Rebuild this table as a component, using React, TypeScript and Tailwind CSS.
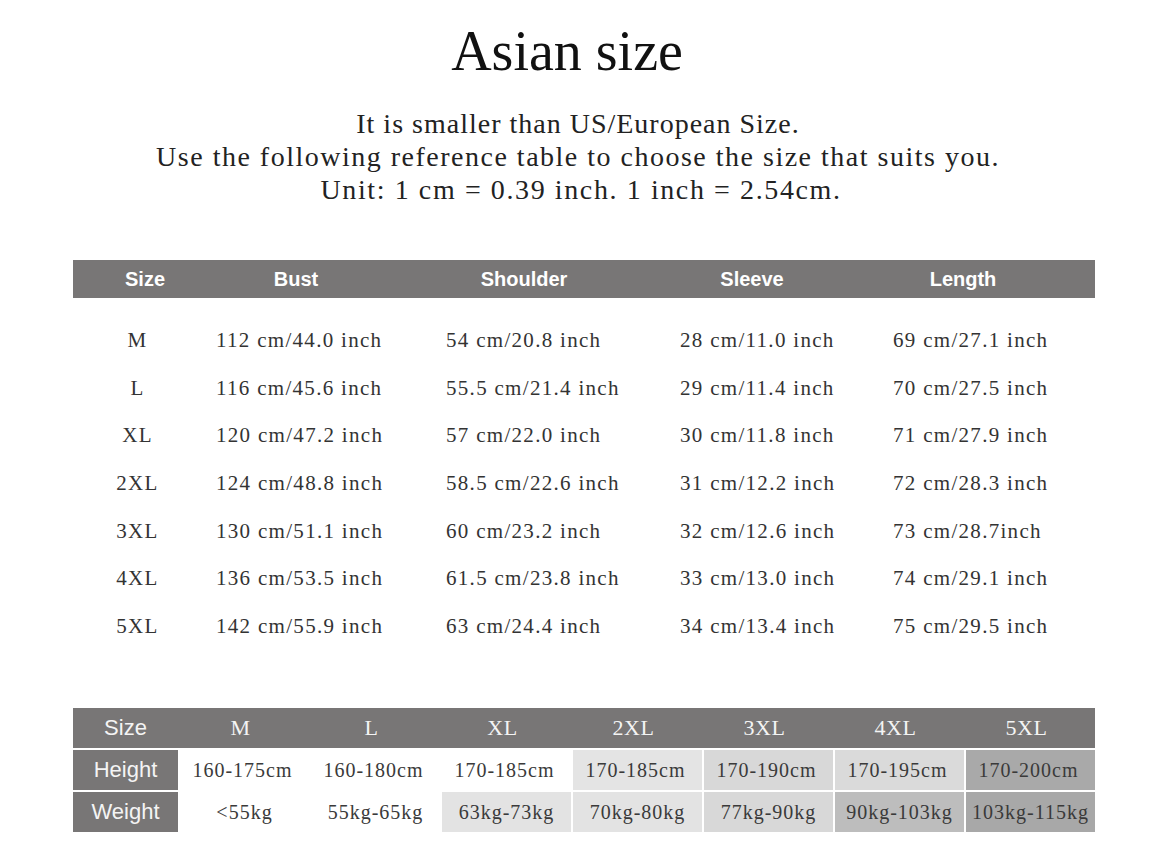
import React from "react";

const rows = [
  ["M", "112 cm/44.0 inch", "54 cm/20.8 inch", "28 cm/11.0 inch", "69 cm/27.1 inch"],
  ["L", "116 cm/45.6 inch", "55.5 cm/21.4 inch", "29 cm/11.4 inch", "70 cm/27.5 inch"],
  ["XL", "120 cm/47.2 inch", "57 cm/22.0 inch", "30 cm/11.8 inch", "71 cm/27.9 inch"],
  ["2XL", "124 cm/48.8 inch", "58.5 cm/22.6 inch", "31 cm/12.2 inch", "72 cm/28.3 inch"],
  ["3XL", "130 cm/51.1 inch", "60 cm/23.2 inch", "32 cm/12.6 inch", "73 cm/28.7inch"],
  ["4XL", "136 cm/53.5 inch", "61.5 cm/23.8 inch", "33 cm/13.0 inch", "74 cm/29.1 inch"],
  ["5XL", "142 cm/55.9 inch", "63 cm/24.4 inch", "34 cm/13.4 inch", "75 cm/29.5 inch"],
];

const sizes = ["M", "L", "XL", "2XL", "3XL", "4XL", "5XL"];
const heights: [string, string][] = [
  ["160-175cm", "bg-white"],
  ["160-180cm", "bg-white"],
  ["170-185cm", "bg-white"],
  ["170-185cm", "bg-[#e4e4e4]"],
  ["170-190cm", "bg-[#d8d8d8]"],
  ["170-195cm", "bg-[#dadada]"],
  ["170-200cm", "bg-[#a9a9a9]"],
];
const weights: [string, string][] = [
  ["<55kg", "bg-white"],
  ["55kg-65kg", "bg-white"],
  ["63kg-73kg", "bg-[#e3e3e3]"],
  ["70kg-80kg", "bg-[#e3e3e3]"],
  ["77kg-90kg", "bg-[#d8d8d8]"],
  ["90kg-103kg", "bg-[#bdbdbd]"],
  ["103kg-115kg", "bg-[#a8a8a8]"],
];

const serif = "font-['Liberation_Serif',serif]";
const sans = "font-['Liberation_Sans',Arial,sans-serif]";

export default function App() {
  return (
    <div className={`w-[1156px] h-[846px] bg-white overflow-hidden ${serif}`}>
      <h1 className="mt-[23px] pr-[22px] text-center text-[56px] leading-[56px] text-[#111]">Asian size</h1>
      <div className="mt-[28px] text-center text-[28px] leading-[33px] text-[#222]">
        <p className="tracking-[1px]">It is smaller than US/European Size.</p>
        <p className="tracking-[1.5px]">Use the following reference table to choose the size that suits you.</p>
        <p className="tracking-[1.6px] pl-[6px]">Unit: 1 cm = 0.39 inch. 1 inch = 2.54cm.</p>
      </div>

      <div className="ml-[73px] w-[1022px] mt-[54px]">
        <div className={`grid grid-cols-[144px_158px_298px_158px_264px] h-[38px] items-center bg-[#787676] text-white font-bold text-[20px] text-center ${sans}`}>
          <div>Size</div>
          <div>Bust</div>
          <div>Shoulder</div>
          <div>Sleeve</div>
          <div>Length</div>
        </div>
        <div className="mt-[19px] text-[#333] text-[21px] tracking-[1.3px]">
          {rows.map((r) => (
            <div key={r[0]} className="grid grid-cols-[143px_230px_234px_213px_202px] h-[47.67px] items-center">
              <div className="text-center pr-[14px]">{r[0]}</div>
              <div>{r[1]}</div>
              <div>{r[2]}</div>
              <div>{r[3]}</div>
              <div>{r[4]}</div>
            </div>
          ))}
        </div>
      </div>

      <div className="ml-[73px] w-[1022px] mt-[57px]">
        <div className="grid grid-cols-[105px_repeat(7,1fr)] h-[40px] items-center bg-[#787676] text-[#f4f4f4] text-center">
          <div className={`text-[22px] ${sans}`}>Size</div>
          {sizes.map((s) => (
            <div key={s} className="text-[22px] tracking-[0.5px] pr-[6px]">{s}</div>
          ))}
        </div>
        <div className="mt-[2px] grid grid-cols-[105px_repeat(7,1fr)] gap-[2px] h-[40px] text-[#3a3a3a] text-[20px] tracking-[1px] text-center">
          <div className={`bg-[#787676] text-[#f4f4f4] text-[22px] tracking-normal flex items-center justify-center ${sans}`}>Height</div>
          {heights.map(([t, bg], i) => (
            <div key={i} className={`${bg} flex items-center justify-center pr-[4px]`}>{t}</div>
          ))}
        </div>
        <div className="mt-[2px] grid grid-cols-[105px_repeat(7,1fr)] gap-[2px] h-[40px] text-[#3a3a3a] text-[20px] tracking-[1px] text-center">
          <div className={`bg-[#787676] text-[#f4f4f4] text-[22px] tracking-normal flex items-center justify-center ${sans}`}>Weight</div>
          {weights.map(([t, bg], i) => (
            <div key={i} className={`${bg} flex items-center justify-center whitespace-nowrap`}>{t}</div>
          ))}
        </div>
      </div>
    </div>
  );
}
